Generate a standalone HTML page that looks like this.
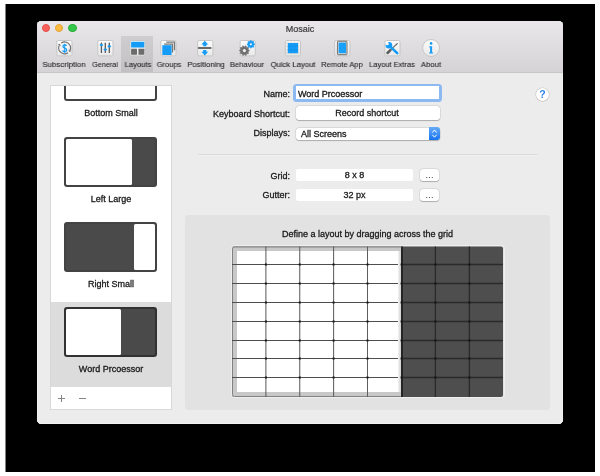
<!DOCTYPE html><html><head><meta charset="utf-8"><style>
*{margin:0;padding:0;box-sizing:border-box}
html,body{width:600px;height:476px;overflow:hidden;background:#fff;font-family:"Liberation Sans",sans-serif;color:#222;-webkit-font-smoothing:antialiased}
div,span{position:absolute}
svg{position:absolute;overflow:visible}
.t8{font-size:8px;line-height:8px;white-space:nowrap;color:#262626;will-change:transform;-webkit-text-stroke:0.1px #262626}
.t9{font-size:9px;line-height:9px;white-space:nowrap;color:#1a1a1a;will-change:transform;-webkit-text-stroke:0.3px #1a1a1a}
</style></head><body>
<div style="left:5px;top:4px;width:590px;height:468px;background:#000"></div>
<div style="left:5px;top:4px;width:1px;height:468px;background:#808080"></div>
<div style="left:37px;top:21px;width:526px;height:403px;background:#ececec;border-radius:4.5px;overflow:hidden;box-shadow:inset 1px 0 0 #f2f2f2,inset -1px 0 0 #f0f0f0,inset 0 -1px 0 #f3f3f3">
<div style="left:0;top:0;width:526px;height:52px;background:linear-gradient(#e9e7e9,#d5d3d5);border-bottom:1px solid #c6c6c6"></div>
</div>
<div style="left:41.50px;top:23.7px;width:8.6px;height:8.6px;border-radius:50%;background:#fc605b;border:0.5px solid #e34d48"></div>
<div style="left:54.90px;top:23.7px;width:8.6px;height:8.6px;border-radius:50%;background:#fdbc40;border:0.5px solid #e2a33a"></div>
<div style="left:68.20px;top:23.7px;width:8.6px;height:8.6px;border-radius:50%;background:#34c84a;border:0.5px solid #2bae3c"></div>
<div class="t9" style="left:250px;width:100px;top:24.7px;text-align:center;color:#3c3c3c;-webkit-text-stroke:0.2px #3c3c3c">Mosaic</div>
<div style="left:121px;top:36px;width:32px;height:36px;background:rgba(0,0,0,0.085)"></div>
<svg width="0" height="0" style="left:0;top:0"><defs><linearGradient id="ibg" x1="0" y1="0" x2="0" y2="1"><stop offset="0" stop-color="#fbfbfb"/><stop offset="1" stop-color="#e9e9e9"/></linearGradient></defs></svg>
<svg width="18" height="17" style="left:56px;top:40px"><g transform="translate(0.30 0)"><rect x="0.5" y="0.5" width="15.2" height="15.4" rx="1.5" fill="url(#ibg)" stroke="#c6c6c6" stroke-width="1"/><path d="M4.92 3.07 A5.9 5.9 0 0 1 13.65 10.39" fill="none" stroke="#707070" stroke-width="1.15"/><path d="M11.68 12.73 A5.9 5.9 0 0 1 2.95 5.41" fill="none" stroke="#707070" stroke-width="1.15"/><path d="M12.89 12.02 L15.10 11.07 L12.20 9.72Z" fill="#6e6e6e"/><path d="M3.71 3.78 L1.50 4.73 L4.40 6.08Z" fill="#6e6e6e"/><g transform="translate(8.4 8.2) scale(0.86 0.9) translate(-8.3 -8.2)"><path d="M10.6 5.5 C10.1 4.7 9.3 4.4 8.3 4.4 C7.1 4.4 6.2 5.0 6.2 6.1 C6.2 7.3 7.3 7.7 8.3 8.0 C9.5 8.4 10.6 8.8 10.6 10.2 C10.6 11.4 9.5 12.0 8.3 12.0 C7.2 12.0 6.3 11.6 5.8 10.7" fill="none" stroke="#149cf6" stroke-width="1.45"/><path d="M8.3 3.2 V13.3" stroke="#149cf6" stroke-width="1.2"/></g></g></svg>
<div class="t8" style="left:24.25px;width:80px;top:61px;text-align:center;transform:scaleX(0.9813)">Subscription</div>
<svg width="18" height="17" style="left:97px;top:40px"><g transform="translate(0.30 0)"><rect x="0.5" y="0.5" width="15.2" height="15.4" rx="1.5" fill="url(#ibg)" stroke="#c6c6c6" stroke-width="1"/><rect x="3.45" y="2.6" width="1.3" height="10.4" rx="0.6" fill="#5a5a5a"/><rect x="7.35" y="2.6" width="1.3" height="10.4" rx="0.6" fill="#5a5a5a"/><rect x="11.35" y="2.6" width="1.3" height="10.4" rx="0.6" fill="#5a5a5a"/>
<ellipse cx="4.1" cy="5.1" rx="1.8" ry="1.15" fill="#149cf6"/><ellipse cx="8.0" cy="9.6" rx="1.8" ry="1.15" fill="#149cf6"/><ellipse cx="12.0" cy="6.4" rx="1.8" ry="1.15" fill="#149cf6"/></g></svg>
<div class="t8" style="left:64.60px;width:80px;top:61px;text-align:center;transform:scaleX(0.8995)">General</div>
<svg width="18" height="17" style="left:129px;top:40px"><g transform="translate(0.50 0)"><rect x="0.5" y="0.5" width="15.2" height="15.4" rx="1.5" fill="url(#ibg)" stroke="#c6c6c6" stroke-width="1"/><rect x="1.6" y="1.7" width="13.2" height="5.9" rx="0.6" fill="#149cf6"/><rect x="1.6" y="8.8" width="5.9" height="5.9" rx="0.4" fill="#6c6c6c"/><rect x="9.0" y="8.8" width="5.8" height="5.9" rx="0.4" fill="#6c6c6c"/></g></svg>
<div class="t8" style="left:97.60px;width:80px;top:61px;text-align:center;transform:scaleX(0.9547)">Layouts</div>
<svg width="18" height="17" style="left:160px;top:40px"><g transform="translate(0.30 0)"><rect x="0.5" y="0.5" width="15.2" height="15.4" rx="1.5" fill="url(#ibg)" stroke="#c6c6c6" stroke-width="1"/><path d="M6 2.2 H14.2 V10.2" fill="none" stroke="#777" stroke-width="1.3"/><path d="M3.8 4.2 H12.2 V12.4" fill="none" stroke="#777" stroke-width="1.3"/><rect x="2.0" y="5.2" width="9.3" height="9.8" fill="#149cf6"/></g></svg>
<div class="t8" style="left:128.60px;width:80px;top:61px;text-align:center;transform:scaleX(0.9434)">Groups</div>
<svg width="18" height="17" style="left:197px;top:40px"><g transform="translate(0.20 0)"><rect x="0.5" y="0.5" width="15.2" height="15.4" rx="1.5" fill="url(#ibg)" stroke="#c6c6c6" stroke-width="1"/><path d="M7.6 0.8 L11.0 4.4 H9.2 V6.2 H6.0 V4.4 H4.2Z" fill="#149cf6"/><rect x="0.6" y="7" width="13.8" height="2" rx="1" fill="#6a6a6a"/><path d="M7.6 15.4 L11.0 11.8 H9.2 V10.0 H6.0 V11.8 H4.2Z" fill="#149cf6"/></g></svg>
<div class="t8" style="left:165.75px;width:80px;top:61px;text-align:center;transform:scaleX(0.9582)">Positioning</div>
<svg width="18" height="17" style="left:239px;top:40px"><g transform="translate(0.60 0)"><rect x="0.5" y="0.5" width="15.2" height="15.4" rx="1.5" fill="url(#ibg)" stroke="#c6c6c6" stroke-width="1"/><polygon points="9.90,10.60 8.41,11.77 8.93,13.60 7.03,13.67 6.38,15.45 4.80,14.40 3.22,15.45 2.57,13.67 0.67,13.60 1.19,11.77 -0.30,10.60 1.19,9.43 0.67,7.60 2.57,7.53 3.22,5.75 4.80,6.80 6.38,5.75 7.03,7.53 8.93,7.60 8.41,9.43" fill="#707070" stroke="#707070" stroke-width="0.6" stroke-linejoin="round"/><circle cx="4.8" cy="10.6" r="1.6" fill="#f0f0f0"/><polygon points="15.30,4.30 13.98,5.41 14.13,7.13 12.41,6.98 11.30,8.30 10.19,6.98 8.47,7.13 8.62,5.41 7.30,4.30 8.62,3.19 8.47,1.47 10.19,1.62 11.30,0.30 12.41,1.62 14.13,1.47 13.98,3.19" fill="#149cf6" stroke="#149cf6" stroke-width="0.6" stroke-linejoin="round"/><circle cx="11.3" cy="4.3" r="1.1" fill="#f0f0f0"/></g></svg>
<div class="t8" style="left:207.10px;width:80px;top:61px;text-align:center;transform:scaleX(0.9508)">Behaviour</div>
<svg width="18" height="17" style="left:284px;top:40px"><g transform="translate(0.80 0)"><rect x="0.5" y="0.5" width="15.2" height="15.4" rx="1.5" fill="url(#ibg)" stroke="#c6c6c6" stroke-width="1"/><path d="M3 1.2V14.8M6.4 1.2V14.8M9.8 1.2V14.8M13.2 1.2V14.8M1.2 3H14.8M1.2 6.4H14.8M1.2 9.8H14.8M1.2 13.2H14.8" stroke="#c4c4c4" stroke-width="0.8" stroke-dasharray="1 0.9"/><rect x="3" y="3" width="10.3" height="10.2" fill="#149cf6"/><path d="M6.4 3V13.2M9.8 3V13.2M3 6.4H13.3M3 9.8H13.3" stroke="#0f8ee6" stroke-width="0.5"/></g></svg>
<div class="t8" style="left:252.50px;width:80px;top:61px;text-align:center;transform:scaleX(0.9638)">Quick Layout</div>
<svg width="18" height="17" style="left:334px;top:40px"><g transform="translate(0.20 0)"><rect x="0.5" y="0.5" width="15.2" height="15.4" rx="1.5" fill="url(#ibg)" stroke="#c6c6c6" stroke-width="1"/><rect x="3.2" y="1.2" width="9.6" height="13.5" rx="0.8" fill="#e0dcd8" stroke="#6e6e6e" stroke-width="1"/><rect x="4.4" y="2.6" width="7.4" height="10.6" fill="#19a0fb"/></g></svg>
<div class="t8" style="left:302.10px;width:80px;top:61px;text-align:center;transform:scaleX(0.9483)">Remote App</div>
<svg width="18" height="17" style="left:384px;top:40px"><g transform="translate(0.30 0)"><rect x="0.5" y="0.5" width="15.2" height="15.4" rx="1.5" fill="url(#ibg)" stroke="#c6c6c6" stroke-width="1"/><mask id="wm" maskUnits="userSpaceOnUse" x="0" y="0" width="16" height="16"><rect x="0" y="0" width="16" height="16" fill="#fff"/><circle cx="3.0" cy="3.7" r="1.5" fill="#000"/><path d="M3.0 3.7 L-0.5 0" stroke="#000" stroke-width="3"/></mask>
<path d="M3.2 13.0 L6.1 10.2" stroke="#5a5a5a" stroke-width="2.5" stroke-linecap="round"/><path d="M5.9 10.1 L13.1 3.5" stroke="#6a6a6a" stroke-width="1.1" stroke-linecap="round"/>
<g mask="url(#wm)" fill="#149cf6"><circle cx="4.6" cy="5.3" r="3.3"/><path d="M4.9 5.6 L12.9 13.1" stroke="#149cf6" stroke-width="2.6" stroke-linecap="round"/></g></g></svg>
<div class="t8" style="left:352.10px;width:80px;top:61px;text-align:center;transform:scaleX(0.9353)">Layout Extras</div>
<svg width="18" height="17" style="left:423px;top:40px"><g transform="translate(0.10 0)"><circle cx="8" cy="8" r="8.5" fill="url(#ibg)" stroke="#c2c2c2" stroke-width="0.9"/>
<circle cx="8" cy="3.4" r="1.3" fill="#149cf6"/><path d="M6.2 6.2 H9.0 V12.4 H10.0 V13.6 H6.0 V12.4 H7.0 V7.4 H6.2Z" fill="#149cf6"/></g></svg>
<div class="t8" style="left:391.25px;width:80px;top:61px;text-align:center;transform:scaleX(0.9566)">About</div>
<div style="left:50px;top:85px;width:122px;height:325px;background:#fff;border:1px solid #d8d8d8;overflow:hidden">
<div style="left:0;top:216px;width:120px;height:85px;background:#dcdcdc"></div>
<div style="left:13px;top:-35px;width:93px;height:50px;border:2px solid #434343;border-radius:3px;background:#fff"></div>
<div class="t9" style="left:0;width:120px;top:23.4px;text-align:center">Bottom Small</div>
<div style="left:13px;top:51px;width:93px;height:50px;border-radius:3px;background:#434343"></div>
<div style="left:15px;top:53px;width:89px;height:46px;border-radius:1.5px;background:#4a4a4a"></div>
<div style="left:15px;top:53px;width:66px;height:46px;border-radius:1.5px;background:#fff"></div>
<div class="t9" style="left:0;width:120px;top:108.8px;text-align:center">Left Large</div>
<div style="left:13px;top:136px;width:93px;height:50px;border-radius:3px;background:#434343"></div>
<div style="left:15px;top:138px;width:89px;height:46px;border-radius:1.5px;background:#4a4a4a"></div>
<div style="left:83px;top:138px;width:21px;height:46px;border-radius:1.5px;background:#fff"></div>
<div class="t9" style="left:0;width:120px;top:194.1px;text-align:center">Right Small</div>
<div style="left:13px;top:221px;width:93px;height:50px;border-radius:3px;background:#323232"></div>
<div style="left:15px;top:223px;width:89px;height:46px;border-radius:1.5px;background:#4a4a4a"></div>
<div style="left:15px;top:223px;width:55px;height:46px;border-radius:1.5px;background:#fff"></div>
<div class="t9" style="left:0;width:120px;top:279.2px;text-align:center">Word Prcoessor</div>
</div>
<div style="left:58px;top:398px;width:7px;height:1px;background:#858585"></div>
<div style="left:61px;top:395px;width:1px;height:7px;background:#858585"></div>
<div style="left:79px;top:398px;width:7px;height:1px;background:#858585"></div>
<div class="t9" style="left:190px;width:100px;top:90.4px;text-align:right">Name:</div>
<div class="t9" style="left:190px;width:100px;top:109.6px;text-align:right">Keyboard Shortcut:</div>
<div class="t9" style="left:190px;width:100px;top:128.7px;text-align:right">Displays:</div>
<div class="t9" style="left:190px;width:100px;top:171.7px;text-align:right">Grid:</div>
<div class="t9" style="left:190px;width:100px;top:191.0px;text-align:right">Gutter:</div>
<div style="left:293px;top:83.8px;width:148.5px;height:17.9px;border-radius:3.5px;background:#8cb9f2"></div>
<div style="left:295.7px;top:86px;width:143.1px;height:13.4px;background:#fff"></div>
<div class="t9" style="left:298px;top:90px;color:#111">Word Prcoessor</div>
<div style="left:295.5px;top:106px;width:144px;height:14px;border-radius:3px;background:#fff;box-shadow:0 0 0 0.5px rgba(0,0,0,0.12),0 0.5px 1px rgba(0,0,0,0.22)"></div>
<div class="t9" style="left:295px;width:144px;top:109.4px;text-align:center">Record shortcut</div>
<div style="left:295.5px;top:127.5px;width:144px;height:12.5px;border-radius:3px;background:#fff;box-shadow:0 0 0 0.5px rgba(0,0,0,0.12),0 0.5px 1px rgba(0,0,0,0.22)"></div>
<div style="left:429px;top:127px;width:11px;height:13px;border-radius:0 3px 3px 0;background:linear-gradient(#65abf8,#1673ef)"></div>
<svg width="11" height="13" style="left:429px;top:127px"><path d="M3.3 5.6 L5.5 3.0 L7.7 5.6 M3.3 7.7 L5.5 10.2 L7.7 7.7" fill="none" stroke="#fff" stroke-width="1"/></svg>
<div class="t9" style="left:301.2px;top:129.9px">All Screens</div>
<div style="left:198px;top:154px;width:339px;height:1px;background:#d9d9d9"></div>
<div style="left:198px;top:155px;width:339px;height:1px;background:#f2f2f2"></div>
<div style="left:296px;top:168.75px;width:117px;height:12.5px;border-radius:2px;background:#fff"></div>
<div class="t9" style="left:296px;width:117px;top:170.85px;text-align:center">8 x 8</div>
<div style="left:419.7px;top:168.75px;width:19.5px;height:12.5px;border-radius:3px;background:#fff;box-shadow:0 0 0 0.5px rgba(0,0,0,0.12),0 0.5px 1px rgba(0,0,0,0.22)"></div>
<div class="t9" style="left:420.3px;width:19.5px;top:171.05px;text-align:center;font-size:9px;letter-spacing:0.25px;-webkit-text-stroke:0;color:#333">...</div>
<div style="left:296px;top:188.75px;width:117px;height:12.5px;border-radius:2px;background:#fff"></div>
<div class="t9" style="left:296px;width:117px;top:190.85px;text-align:center">32 px</div>
<div style="left:419.7px;top:188.75px;width:19.5px;height:12.5px;border-radius:3px;background:#fff;box-shadow:0 0 0 0.5px rgba(0,0,0,0.12),0 0.5px 1px rgba(0,0,0,0.22)"></div>
<div class="t9" style="left:420.3px;width:19.5px;top:191.05px;text-align:center;font-size:9px;letter-spacing:0.25px;-webkit-text-stroke:0;color:#333">...</div>
<div style="left:535.5px;top:87.5px;width:13px;height:13px;border-radius:50%;background:#fff;box-shadow:0 0 0 0.5px rgba(0,0,0,0.16),0 0.5px 1px rgba(0,0,0,0.12)"></div>
<div style="left:535.6px;top:88.6px;width:13px;text-align:center;font-size:10.5px;line-height:10.5px;font-weight:bold;color:#3086f0;will-change:transform">?</div>
<div style="left:185px;top:215px;width:365px;height:195px;border-radius:4px;background:#e2e2e2"></div>
<div class="t9" style="left:185px;width:365px;top:230.2px;text-align:center">Define a layout by dragging across the grid</div>
<svg width="274" height="154" style="left:231px;top:245px"><defs><linearGradient id="rb" x1="0" y1="0" x2="1" y2="0"><stop offset="0" stop-color="#f4f4f4"/><stop offset="1" stop-color="#cfcfcf"/></linearGradient></defs><rect x="0.5" y="0.5" width="273.0" height="152.0" rx="3" fill="none" stroke="#efefef" stroke-width="1"/><rect x="1" y="1.5" width="271" height="150.39999999999998" rx="2" fill="#4e4e4e"/><rect x="1" y="1.5" width="169.60000000000002" height="150.5" fill="#c8c8c8"/><rect x="6" y="6" width="161" height="141" fill="#fff"/><path d="M170.60000000000002 2 H3.5 Q1.5 2 1.5 4 V149.5 Q1.5 151.5 3.5 151.5 H170.60000000000002" fill="none" stroke="#828282" stroke-width="1"/><line x1="34.89999999999998" y1="1.5" x2="34.89999999999998" y2="152" stroke="#5e5e5e" stroke-width="1.05"/><line x1="68.75" y1="1.5" x2="68.75" y2="152" stroke="#5e5e5e" stroke-width="1.05"/><line x1="102.60000000000002" y1="1.5" x2="102.60000000000002" y2="152" stroke="#5e5e5e" stroke-width="1.05"/><line x1="136.5" y1="1.5" x2="136.5" y2="152" stroke="#5e5e5e" stroke-width="1.05"/><line x1="1" y1="19.5" x2="170.60000000000002" y2="19.5" stroke="#4e4e4e" stroke-width="1"/><line x1="1" y1="38.5" x2="170.60000000000002" y2="38.5" stroke="#4e4e4e" stroke-width="1"/><line x1="1" y1="57.5" x2="170.60000000000002" y2="57.5" stroke="#4e4e4e" stroke-width="1"/><line x1="1" y1="76.5" x2="170.60000000000002" y2="76.5" stroke="#4e4e4e" stroke-width="1"/><line x1="1" y1="95.5" x2="170.60000000000002" y2="95.5" stroke="#4e4e4e" stroke-width="1"/><line x1="1" y1="113.5" x2="170.60000000000002" y2="113.5" stroke="#4e4e4e" stroke-width="1"/><line x1="1" y1="132.5" x2="170.60000000000002" y2="132.5" stroke="#4e4e4e" stroke-width="1"/><rect x="167" y="6" width="3" height="141" fill="url(#rb)"/><line x1="171" y1="1.5" x2="171" y2="152" stroke="#252525" stroke-width="2"/><line x1="204.39999999999998" y1="1.5" x2="204.39999999999998" y2="152" stroke="#2a2a2a" stroke-width="1.3"/><line x1="238.39999999999998" y1="1.5" x2="238.39999999999998" y2="152" stroke="#2a2a2a" stroke-width="1.3"/><line x1="170.60000000000002" y1="19.5" x2="272" y2="19.5" stroke="#2a2a2a" stroke-width="1.3"/><line x1="170.60000000000002" y1="38.5" x2="272" y2="38.5" stroke="#2a2a2a" stroke-width="1.3"/><line x1="170.60000000000002" y1="57.5" x2="272" y2="57.5" stroke="#2a2a2a" stroke-width="1.3"/><line x1="170.60000000000002" y1="76.5" x2="272" y2="76.5" stroke="#2a2a2a" stroke-width="1.3"/><line x1="170.60000000000002" y1="95.5" x2="272" y2="95.5" stroke="#2a2a2a" stroke-width="1.3"/><line x1="170.60000000000002" y1="113.5" x2="272" y2="113.5" stroke="#2a2a2a" stroke-width="1.3"/><line x1="170.60000000000002" y1="132.5" x2="272" y2="132.5" stroke="#2a2a2a" stroke-width="1.3"/><rect x="33.89999999999998" y="18.5" width="2" height="2" fill="#161616"/><rect x="33.89999999999998" y="37.5" width="2" height="2" fill="#161616"/><rect x="33.89999999999998" y="56.5" width="2" height="2" fill="#161616"/><rect x="33.89999999999998" y="75.5" width="2" height="2" fill="#161616"/><rect x="33.89999999999998" y="94.5" width="2" height="2" fill="#161616"/><rect x="33.89999999999998" y="112.5" width="2" height="2" fill="#161616"/><rect x="33.89999999999998" y="131.5" width="2" height="2" fill="#161616"/><rect x="67.75" y="18.5" width="2" height="2" fill="#161616"/><rect x="67.75" y="37.5" width="2" height="2" fill="#161616"/><rect x="67.75" y="56.5" width="2" height="2" fill="#161616"/><rect x="67.75" y="75.5" width="2" height="2" fill="#161616"/><rect x="67.75" y="94.5" width="2" height="2" fill="#161616"/><rect x="67.75" y="112.5" width="2" height="2" fill="#161616"/><rect x="67.75" y="131.5" width="2" height="2" fill="#161616"/><rect x="101.60000000000002" y="18.5" width="2" height="2" fill="#161616"/><rect x="101.60000000000002" y="37.5" width="2" height="2" fill="#161616"/><rect x="101.60000000000002" y="56.5" width="2" height="2" fill="#161616"/><rect x="101.60000000000002" y="75.5" width="2" height="2" fill="#161616"/><rect x="101.60000000000002" y="94.5" width="2" height="2" fill="#161616"/><rect x="101.60000000000002" y="112.5" width="2" height="2" fill="#161616"/><rect x="101.60000000000002" y="131.5" width="2" height="2" fill="#161616"/><rect x="135.5" y="18.5" width="2" height="2" fill="#161616"/><rect x="135.5" y="37.5" width="2" height="2" fill="#161616"/><rect x="135.5" y="56.5" width="2" height="2" fill="#161616"/><rect x="135.5" y="75.5" width="2" height="2" fill="#161616"/><rect x="135.5" y="94.5" width="2" height="2" fill="#161616"/><rect x="135.5" y="112.5" width="2" height="2" fill="#161616"/><rect x="135.5" y="131.5" width="2" height="2" fill="#161616"/><rect x="169.60000000000002" y="18.5" width="2" height="2" fill="#161616"/><rect x="169.60000000000002" y="37.5" width="2" height="2" fill="#161616"/><rect x="169.60000000000002" y="56.5" width="2" height="2" fill="#161616"/><rect x="169.60000000000002" y="75.5" width="2" height="2" fill="#161616"/><rect x="169.60000000000002" y="94.5" width="2" height="2" fill="#161616"/><rect x="169.60000000000002" y="112.5" width="2" height="2" fill="#161616"/><rect x="169.60000000000002" y="131.5" width="2" height="2" fill="#161616"/><rect x="203.39999999999998" y="18.5" width="2" height="2" fill="#161616"/><rect x="203.39999999999998" y="37.5" width="2" height="2" fill="#161616"/><rect x="203.39999999999998" y="56.5" width="2" height="2" fill="#161616"/><rect x="203.39999999999998" y="75.5" width="2" height="2" fill="#161616"/><rect x="203.39999999999998" y="94.5" width="2" height="2" fill="#161616"/><rect x="203.39999999999998" y="112.5" width="2" height="2" fill="#161616"/><rect x="203.39999999999998" y="131.5" width="2" height="2" fill="#161616"/><rect x="237.39999999999998" y="18.5" width="2" height="2" fill="#161616"/><rect x="237.39999999999998" y="37.5" width="2" height="2" fill="#161616"/><rect x="237.39999999999998" y="56.5" width="2" height="2" fill="#161616"/><rect x="237.39999999999998" y="75.5" width="2" height="2" fill="#161616"/><rect x="237.39999999999998" y="94.5" width="2" height="2" fill="#161616"/><rect x="237.39999999999998" y="112.5" width="2" height="2" fill="#161616"/><rect x="237.39999999999998" y="131.5" width="2" height="2" fill="#161616"/></svg>
</body></html>
